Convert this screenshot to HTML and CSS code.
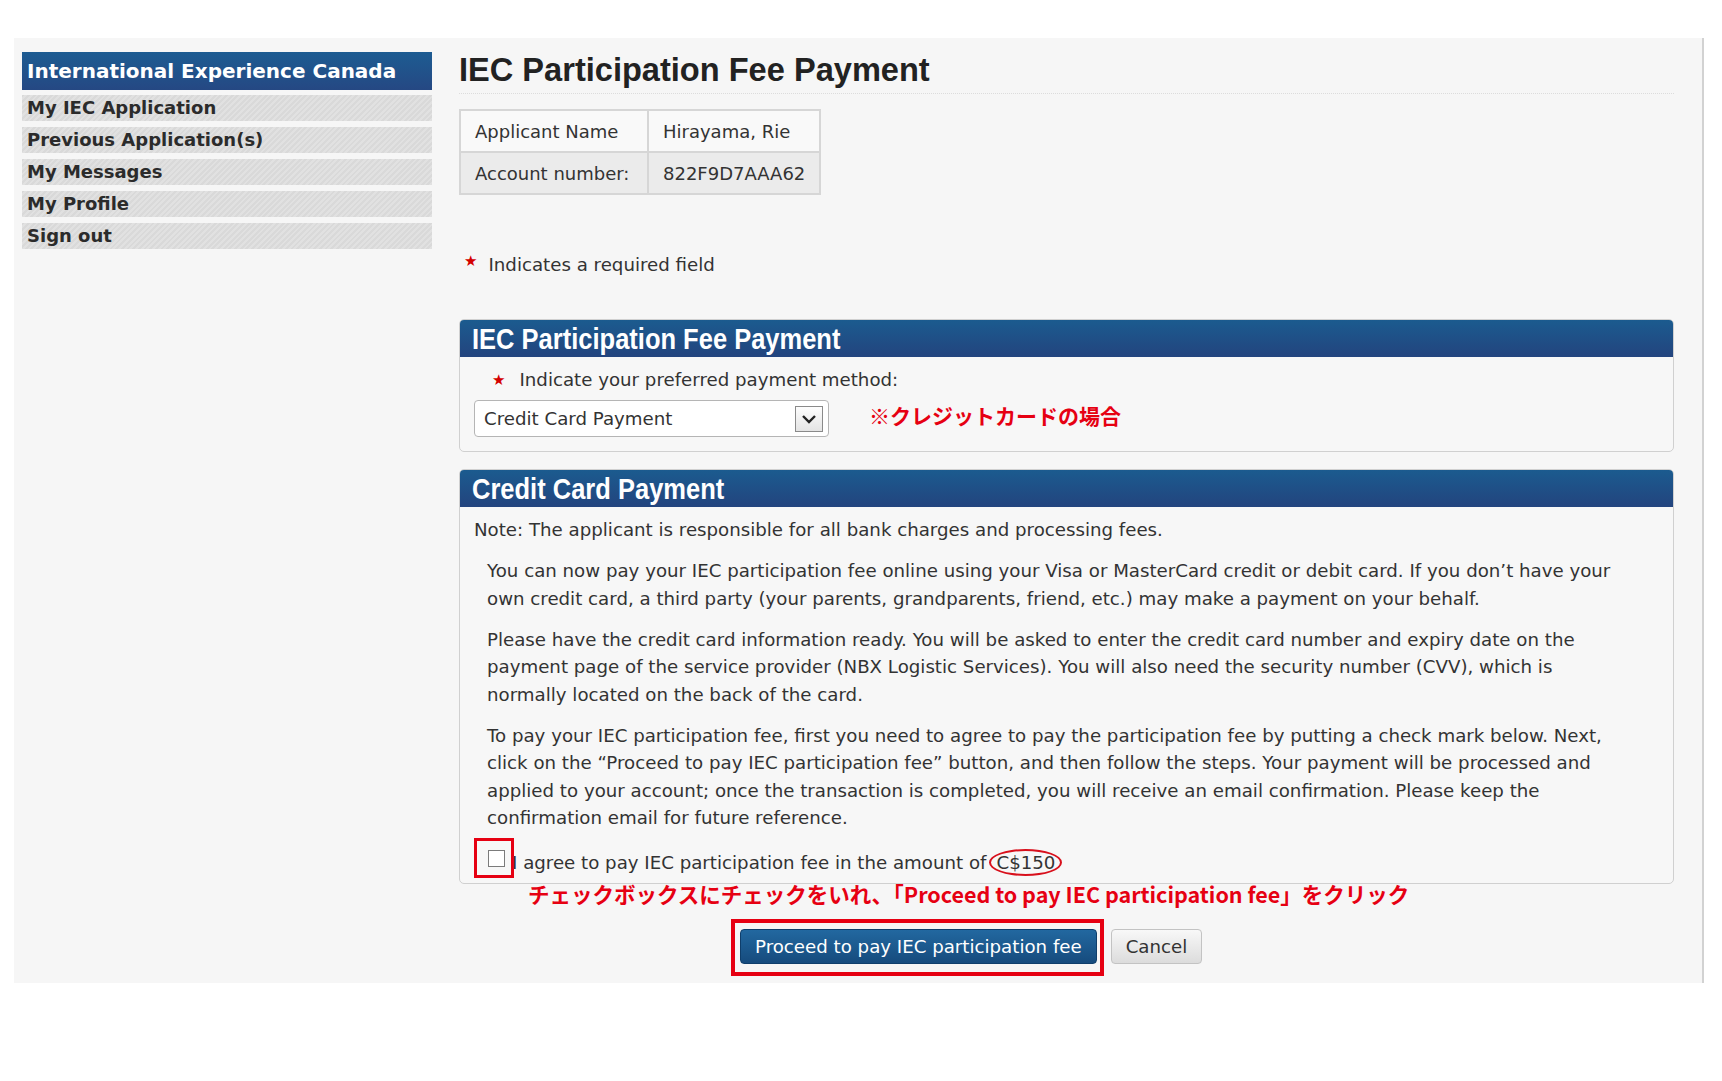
FILE: index.html
```html
<!DOCTYPE html>
<html lang="en">
<head>
    <meta charset="UTF-8">
    <title>IEC Participation Fee Payment</title>
    <link rel="stylesheet" href="styles.css">
</head>
<body>

    <div class="page">

        <!-- Left menu -->
        <aside class="sidebar">
            <div class="side-title">International Experience Canada</div>
            <ul class="side-menu">
                <li><a href="#">My IEC Application</a></li>
                <li><a href="#">Previous Application(s)</a></li>
                <li><a href="#">My Messages</a></li>
                <li><a href="#">My Profile</a></li>
                <li><a href="#">Sign out</a></li>
            </ul>
        </aside>

        <!-- Main content -->
        <main class="content">
            <h1 class="page-title">IEC Participation Fee Payment</h1>

            <table class="info">
                <tr>
                    <td class="info-label">Applicant Name</td>
                    <td class="info-value">Hirayama, Rie</td>
                </tr>
                <tr class="alt">
                    <td class="info-label">Account number:</td>
                    <td class="info-value">822F9D7AAA62</td>
                </tr>
            </table>

            <p class="required-note"><span class="star">★</span>Indicates a required field</p>

            <section class="panel">
                <h2 class="panel-head"><span>IEC Participation Fee Payment</span></h2>
                <div class="panel-body method">
                    <div class="field-label"><span class="star">★</span>Indicate your preferred payment method:</div>
                    <div class="select-row">
                        <div class="select">
                            Credit Card Payment
                            <span class="select-arrow">
                                <svg width="16" height="12" viewBox="0 0 16 12"><path d="M2 3 L8 9 L14 3" fill="none" stroke="#222" stroke-width="2.4"/></svg>
                            </span>
                        </div>
                        <span class="annot">※クレジットカードの場合</span>
                    </div>
                </div>
            </section>

            <section class="panel">
                <h2 class="panel-head"><span>Credit Card Payment</span></h2>
                <div class="panel-body">
                    <p class="note">Note: The applicant is responsible for all bank charges and processing fees.</p>
                    <p class="info-text">You can now pay your IEC participation fee online using your Visa or MasterCard credit or debit card. If you don’t have your own credit card, a third party (your parents, grandparents, friend, etc.) may make a payment on your behalf.</p>
                    <p class="info-text">Please have the credit card information ready. You will be asked to enter the credit card number and expiry date on the payment page of the service provider (NBX Logistic Services). You will also need the security number (CVV), which is normally located on the back of the card.</p>
                    <p class="info-text">To pay your IEC participation fee, first you need to agree to pay the participation fee by putting a check mark below. Next, click on the “Proceed to pay IEC participation fee” button, and then follow the steps. Your payment will be processed and applied to your account; once the transaction is completed, you will receive an email confirmation. Please keep the confirmation email for future reference.</p>
                    <label class="agree">
                        <span class="check-mark"><input type="checkbox"></span><span class="agree-text">I agree to pay IEC participation fee in the amount of<span class="circled">C$150</span></span>
                    </label>
                </div>
            </section>

            <p class="annot annot-long">チェックボックスにチェックをいれ、「Proceed to pay IEC participation fee」をクリック</p>

            <div class="actions">
                <span class="btn-mark"><button class="btn btn-primary">Proceed to pay IEC participation fee</button></span>
                <button class="btn">Cancel</button>
            </div>
        </main>
    </div>

</body>
</html>
```

FILE: styles.css
```css
body {
    margin: 0;
    background-color: #fff;
    font-family: "DejaVu Sans", Verdana, sans-serif;
    color: #333;
}
.page {
    display: flex;
    box-sizing: border-box;
    width: 1690px;
    height: 945px;
    margin: 38px 0 0 14px;
    padding-left: 8px;
    background-color: #f6f6f6;
    border-right: 2px solid #d2d2d2;
}

/* sidebar */
.sidebar {
    flex: none;
    width: 410px;
    margin-top: 14px;
}
.side-title {
    height: 38px;
    line-height: 39px;
    padding-left: 5px;
    background: linear-gradient(#1d5c92, #254883);
    color: white;
    font-size: 20px;
    font-weight: bold;
}
.side-menu {
    list-style: none;
    margin: 5px 0 0;
    padding: 0;
}
.side-menu li {
    margin-bottom: 6px;
}
.side-menu a {
    display: block;
    height: 26px;
    line-height: 26px;
    padding-left: 5px;
    background: repeating-linear-gradient(135deg, #d9d9d9 0 2px, #e1e1e1 2px 4px);
    color: #2b2b2b;
    font-size: 18px;
    font-weight: bold;
    text-decoration: none;
}

/* main column */
.content {
    width: 1215px;
    margin-left: 27px;
    padding-top: 12px;
    font-size: 18.2px;
}
.page-title {
    margin: 0;
    padding-bottom: 3px;
    border-bottom: 1px dotted #dcdcdc;
    font: bold 32.6px/40px "Liberation Sans", Arial, sans-serif;
    color: #222;
}
.info {
    margin-top: 15px;
    border-collapse: collapse;
    border: 2px solid #cfcfcf;
    font-size: 18px;
}
.info td {
    height: 40px;
    padding: 0 14px;
    border: 2px solid #d6d6d6;
    background-color: #f9f9f9;
}
.info .alt td {
    background-color: #ebebeb;
}
.info-label {
    width: 158px;
}
.info-value {
    width: 141px;
}
.star {
    position: relative;
    color: #d40000;
    font-size: 15px;
    line-height: 1;
}
.required-note {
    margin: 56px 0 0;
    line-height: 27.5px;
}
.required-note .star {
    top: -5px;
    margin: 0 11px 0 5px;
}

/* panels */
.panel {
    margin-top: 40px;
    border: 1px solid #d0d0d0;
    border-radius: 5px;
    background-color: #f7f7f7;
    overflow: hidden;
}
.panel + .panel {
    margin-top: 17px;
}
.panel-head {
    margin: 0;
    height: 37px;
    padding-left: 12px;
    background: linear-gradient(#1b5b8f, #23447e);
    color: white;
    font: bold 30px/37px "Liberation Sans", Arial, sans-serif;
}
.panel-head span {
    display: inline-block;
    transform: scaleX(0.85);
    transform-origin: left center;
}
.panel-body {
    padding: 9px 14px 7px;
}
.panel-body.method {
    padding: 9px 14px 14px;
}
.field-label {
    line-height: 27.5px;
}
.field-label .star {
    top: -1px;
    margin: 0 14px 0 18px;
}
.select-row {
    display: flex;
    align-items: center;
    margin-top: 7px;
}
.select {
    display: flex;
    align-items: center;
    justify-content: space-between;
    box-sizing: border-box;
    width: 355px;
    height: 37px;
    padding: 0 5px 0 9px;
    background-color: white;
    border: 1px solid #b5b5b5;
    border-radius: 4px;
}
.select-arrow {
    display: flex;
    align-items: center;
    justify-content: center;
    width: 26px;
    height: 24px;
    border: 1px solid #8a8a8a;
    background: linear-gradient(#fdfdfd, #e4e4e4);
}
.annot {
    color: #e60012;
    font-family: "Noto Sans CJK JP", sans-serif;
    font-weight: bold;
}
.select-row .annot {
    margin: 0 0 7px 40px;
    font-size: 21px;
}
.note {
    margin: 0;
    line-height: 27.5px;
}
.info-text {
    max-width: 1145px;
    margin: 13.5px 0 0 13px;
    line-height: 27.5px;
}
.agree {
    display: flex;
    align-items: center;
    margin: 17px 0 0 14px;
    line-height: 27.5px;
}
.agree-text {
    position: relative;
}
.check-mark {
    position: relative;
    top: -4px;
    display: flex;
    margin-right: 7px;
}
.check-mark::after {
    content: "";
    position: absolute;
    top: -12px;
    left: -14px;
    right: -9px;
    bottom: -11px;
    border: 3px solid #e60012;
}
.check-mark input {
    appearance: none;
    width: 17px;
    height: 17px;
    margin: 0;
    border: 1px solid #7b7b7b;
    background-color: white;
}
.circled {
    display: inline-block;
    margin-left: 3px;
    padding: 0 5px;
    line-height: 23px;
    border: 2px solid #d8101c;
    border-radius: 50%;
}
.annot-long {
    margin: -3px 0 0 69px;
    font-size: 21.5px;
    line-height: 26px;
}

/* buttons */
.actions {
    display: flex;
    margin: 22px 0 0 281px;
}
.btn-mark {
    position: relative;
    display: flex;
    margin-right: 14px;
}
.btn-mark::after {
    content: "";
    position: absolute;
    top: -10px;
    left: -9px;
    right: -7px;
    bottom: -12px;
    border: 4px solid #e60012;
}
.btn {
    height: 35px;
    padding: 0 14px;
    border: 1px solid #c3c3c3;
    border-radius: 4px;
    background: linear-gradient(#f8f8f8, #dcdcdc);
    color: #333;
    font-family: "DejaVu Sans", Verdana, sans-serif;
    font-size: 18.2px;
}
.btn-primary {
    border-color: #0f3e6b;
    background: linear-gradient(#2268a0, #164b7d);
    color: white;
}
```
